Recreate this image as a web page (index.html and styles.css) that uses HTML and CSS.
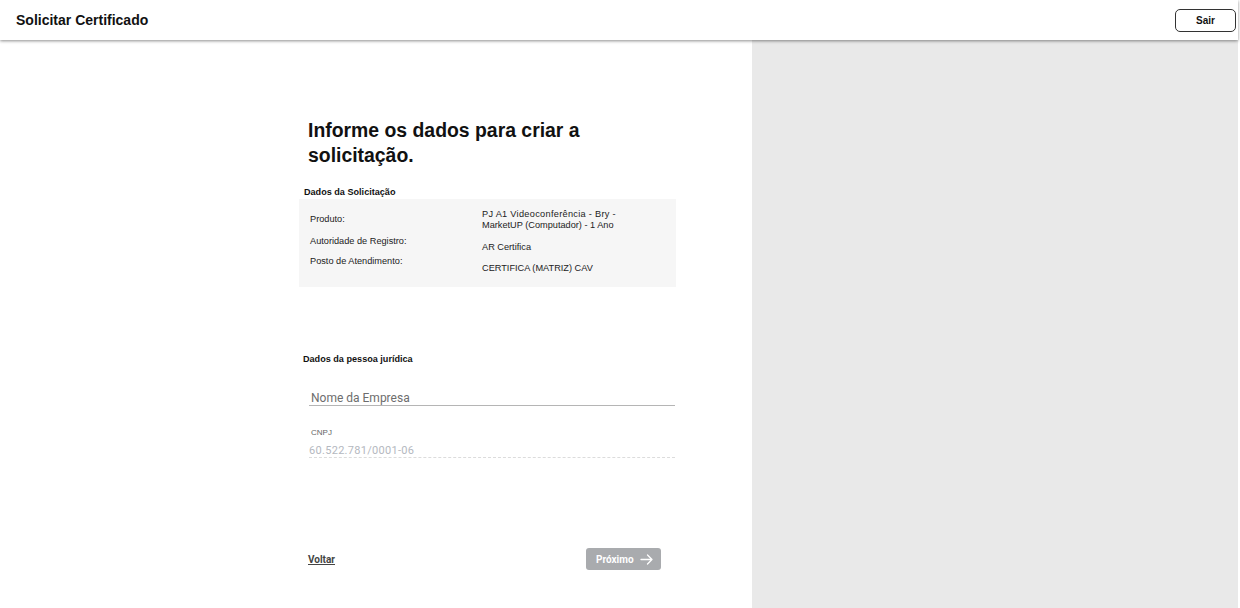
FILE: index.html
```html
<!DOCTYPE html>
<html lang="pt-BR">
<head>
<meta charset="utf-8">
<title>Solicitar Certificado</title>
<link rel="stylesheet" href="styles.css">
</head>
<body>
<header class="topbar">
  <div class="app-title">Solicitar Certificado</div>
  <button class="btn-sair">Sair</button>
</header>
<main class="layout">
  <section class="form-col">
    <div class="form-wrap">
      <h1 class="heading">Informe os dados para criar a solicitação.</h1>
      <div class="section-title">Dados da Solicitação</div>
      <div class="summary">
        <div class="row r1">
          <div class="lbl">Produto:</div>
          <div class="val"><span class="wide">PJ A1 Videoconferência - Bry -</span><br>MarketUP (Computador) - 1 Ano</div>
        </div>
        <div class="row r2">
          <div class="lbl">Autoridade de Registro:</div>
          <div class="val">AR Certifica</div>
        </div>
        <div class="row r3">
          <div class="lbl">Posto de Atendimento:</div>
          <div class="val">CERTIFICA (MATRIZ) CAV</div>
        </div>
      </div>
      <div class="section-title pj">Dados da pessoa jurídica</div>
      <div class="field">
        <div class="input-name">Nome da Empresa</div>
      </div>
      <div class="field cnpj">
        <div class="field-lbl">CNPJ</div>
        <div class="input-cnpj">60.522.781/0001-06</div>
      </div>
      <div class="actions">
        <a class="back" href="#">Voltar</a>
        <button class="btn-next">Próximo
          <svg class="arrow" width="13" height="11" viewBox="0 0 13 11" fill="none" stroke="#fff" stroke-width="1.3" stroke-linecap="round" stroke-linejoin="round"><path d="M1 5.5h11M7.5 1l4.5 4.5L7.5 10"/></svg>
        </button>
      </div>
    </div>
  </section>
  <aside class="side"></aside>
</main>
</body>
</html>
```
FILE: styles.css
```css
* { box-sizing: border-box; }
html, body { margin: 0; padding: 0; }
body {
  font-family: "Liberation Sans", Arial, Helvetica, sans-serif;
  color: #111;
  background: #fff;
  width: 1240px;
  height: 608px;
  overflow: hidden;
}
.topbar {
  position: relative;
  z-index: 2;
  height: 40px;
  display: flex;
  align-items: center;
  justify-content: space-between;
  padding: 0 2px 0 16px;
  margin-right: 2px;
  background: #fff;
  box-shadow: 0 1px 3px rgba(0,0,0,0.45);
}
.app-title {
  font-size: 14px;
  font-weight: 700;
}
.btn-sair {
  width: 61px;
  height: 23px;
  margin-top: 1px;
  border: 1px solid #333;
  border-radius: 5px;
  background: #fff;
  font-family: inherit;
  font-size: 10px;
  font-weight: 700;
  color: #111;
  padding: 0;
}
.layout {
  display: flex;
  height: 568px;
}
.form-col {
  width: 752px;
  flex: none;
}
.side {
  flex: 1;
  background: #e9e9e9;
  margin-right: 2px;
}
.form-wrap {
  margin-left: 299px;
  width: 377px;
  padding-top: 78px;
}
.heading {
  margin: 0 0 0 9px;
  font-size: 19.4px;
  line-height: 25px;
  font-weight: 700;
  width: 290px;
}
.section-title {
  font-size: 9.1px;
  font-weight: 700;
  margin: 18px 0 0 5px;
  line-height: 12px;
}
.summary {
  margin-top: 1px;
  background: #f6f6f6;
  height: 88px;
  padding: 10px 11px 0;
}
.row {
  display: flex;
  font-size: 9.2px;
  line-height: 11px;
  color: #222;
}
.lbl {
  width: 172px;
  flex: none;
}
.wide { letter-spacing: 0.3px; }
.r1 .lbl { padding-top: 5px; }
.r2 { margin-top: 5px; }
.r2 .val { padding-top: 6px; }
.r3 { margin-top: 3px; }
.r3 .val { padding-top: 7px; }
.section-title.pj {
  margin: 66px 0 0 4px;
}
.field {
  margin-left: 10px;
  margin-right: 1px;
  border-bottom: 1px solid #b5b5b5;
}
.input-name {
  margin-top: 27px;
  padding: 0 0 0 2px;
  font-family: Roboto, "Liberation Sans", sans-serif;
  font-size: 12px;
  line-height: 13px;
  color: #6d6d6d;
}
.field.cnpj {
  border-bottom: 1px dashed #dcdcdc;
  margin-top: 22px;
}
.field-lbl {
  font-size: 8px;
  color: #666;
  padding-left: 2px;
  line-height: 10px;
}
.input-cnpj {
  margin-top: 7px;
  font-family: Roboto, "Liberation Sans", sans-serif;
  font-size: 11px;
  line-height: 12px;
  color: #b4b8c0;
  letter-spacing: 0.3px;
}
.actions {
  display: flex;
  justify-content: space-between;
  align-items: center;
  margin: 90px 15px 0 9px;
}
.back {
  font-family: Roboto, "Liberation Sans", sans-serif;
  font-size: 10px;
  font-weight: 700;
  color: #444;
  text-decoration: underline;
}
.btn-next {
  display: flex;
  align-items: center;
  gap: 6px;
  height: 22px;
  width: 75px;
  padding: 0 0 0 10px;
  border: none;
  border-radius: 3px;
  background: #a9abae;
  color: #fff;
  font-family: Roboto, "Liberation Sans", sans-serif;
  font-size: 10px;
  font-weight: 700;
}
.arrow { display: block; }
```
